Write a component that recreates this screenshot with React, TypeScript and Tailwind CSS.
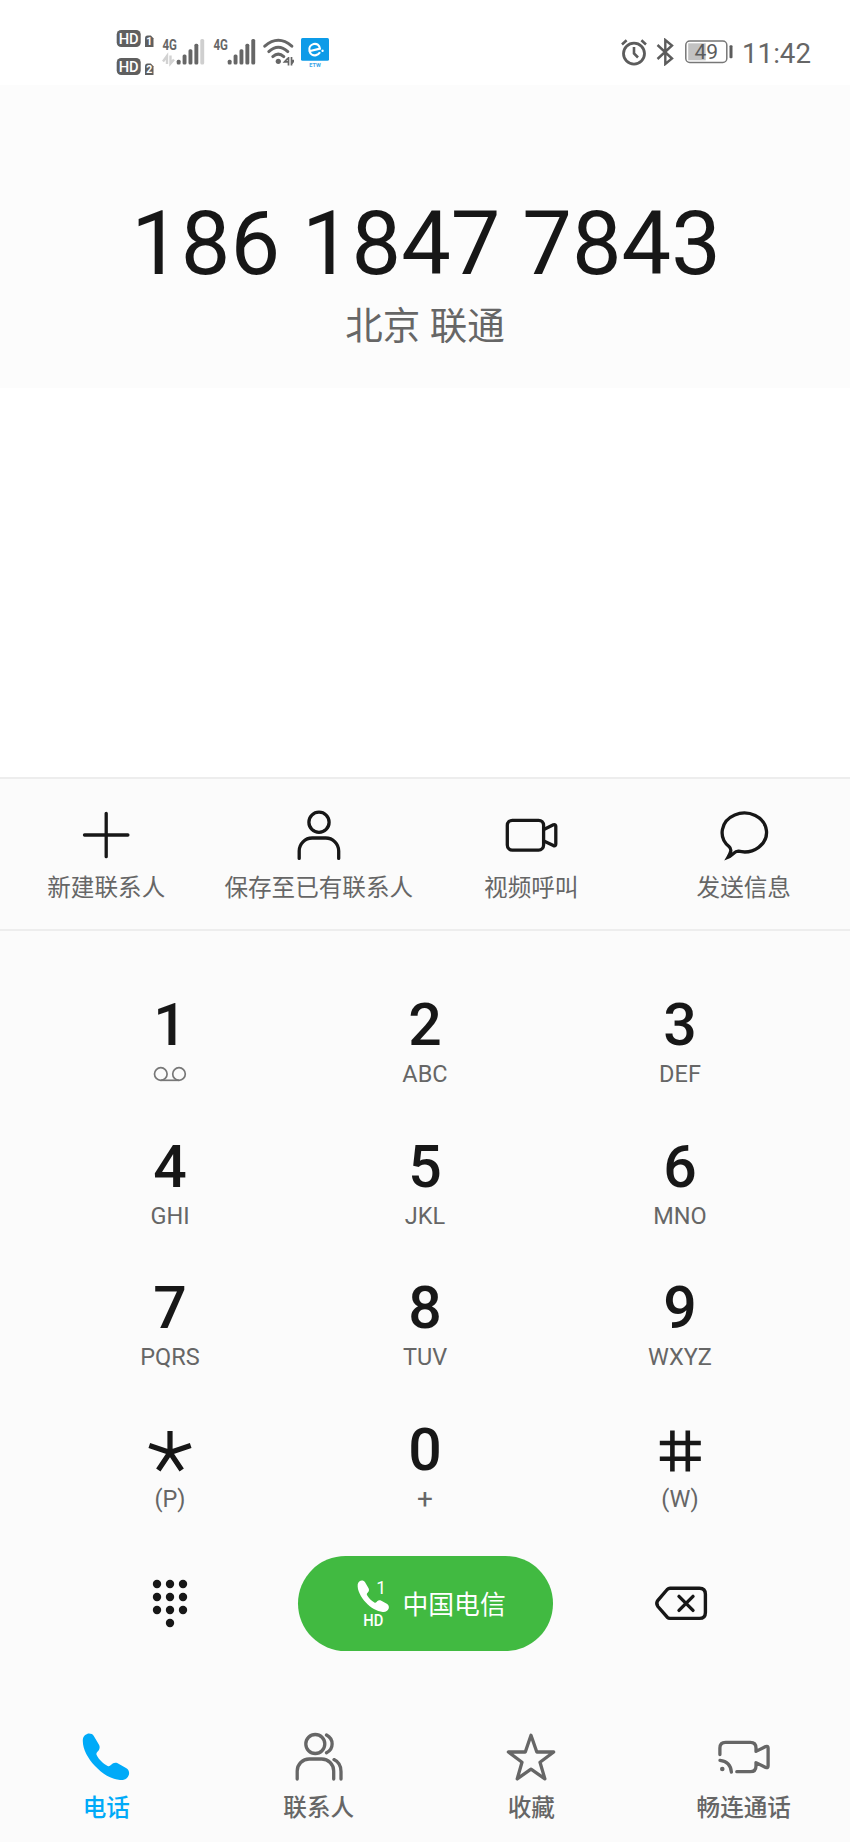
import React from 'react';

const LATIN = "font-['Roboto','Noto_Sans_CJK_SC',sans-serif]";

function HdBadges() {
  return (
    <svg className="h-[50px] w-[38px]" viewBox="0 0 38 50">
      {[0, 28].map((y, i) => (
        <g key={y}>
          <rect x="0.7" y={y + 2} width="24" height="17" rx="4.5" fill="#5f5f5f" />
          <text x="2.700" y={y + 16} textLength="20" lengthAdjust="spacingAndGlyphs" fontFamily="Roboto" fontSize="15.5" fontWeight="500" fill="#fff">HD</text>
          <path d={`M29 ${y + 10.5}q0-3 2.6-3h3.200l2.700 2.700V${y + 19}H29z`} fill="#5f5f5f" />
          <text x="33.2" y={y + 17.2} textAnchor="middle" fontFamily="Roboto" fontSize="10.500" fontWeight="700" fill="#fff">{i + 1}</text>
        </g>
      ))}
    </svg>
  );
}

function Signal({ weak }: { weak?: boolean }) {
  const tops = [31.8, 26.5, 21.2, 15.8, 11];
  return (
    <svg className="h-[50px] w-[43px]" viewBox="0 0 43 50">
      <text x="0.5" y="21.8" textLength="14.5" lengthAdjust="spacingAndGlyphs" fontFamily="Roboto" fontSize="15.5" fontWeight="700" fill="#666">4G</text>
      {weak && (
        <path d="M1 33.500L5 28v8M8.500 27.500v8l3.500-4" fill="none" stroke="#d2d2d2" strokeWidth="2.400" />
      )}
      {tops.map((t, i) => (
        <rect key={t} x={14.7 + i * 5.9} y={t} width="3.9" height={36.5 - t} rx="1.5" fill={weak && i === 4 ? '#cfcfcf' : '#666'} />
      ))}
    </svg>
  );
}

function Wifi() {
  return (
    <svg className="h-[50px] w-[31px]" viewBox="0 0 31 50" fill="none" stroke="#666" strokeWidth="3" strokeLinecap="round">
      <path d="M1.800 18.200Q15.300 6.400 28.800 18.200" />
      <path d="M5.800 23.600Q15.300 15 24.800 23.600" />
      <path d="M9.800 28.600Q15.300 23.600 20.800 28.600" />
      <circle cx="15.300" cy="33.300" r="2.600" fill="#666" stroke="none" />
      <path d="M25.500 29v8.500M25.500 29.500L21.500 33.800h4M28.500 29v8.500M28.500 36l2.500-3.500h-2.500" strokeWidth="1.700" strokeLinecap="butt" />
    </svg>
  );
}

function CloudApp() {
  return (
    <svg className="h-[50px] w-[28px]" viewBox="0 0 28 50">
      <rect y="10" width="28" height="22.800" rx="1.500" fill="#0d9be8" />
      <g transform="rotate(-14 14 21.500)">
        <path d="M9 21.800h10c.3-3.400-1.700-6-5-6-3.300 0-5.700 2.600-5.700 5.800 0 3.400 2.400 5.600 5.400 5.600 1.900 0 3.300-.6 4.500-1.800" fill="none" stroke="#fff" strokeWidth="2.200" />
        <circle cx="21" cy="24.600" r="1.200" fill="#fff" />
      </g>
      <text x="14" y="38.500" textAnchor="middle" fontFamily="Roboto" fontSize="5.500" fontWeight="700" fill="#3aa5e8">ETW</text>
    </svg>
  );
}

function Alarm() {
  return (
    <svg className="h-[28px] w-[28px]" viewBox="0 0 28 28" fill="none" stroke="#5c5c5c" strokeWidth="2.800">
      <circle cx="14" cy="15.600" r="10.500" />
      <path d="M14 9v6.500l4 4M2 6.500l4.600-4.200M26 6.500l-4.600-4.200" strokeWidth="2.600" />
    </svg>
  );
}

function Bluetooth() {
  return (
    <svg className="h-[28px] w-[18px]" viewBox="0 0 18 28" fill="none" stroke="#5c5c5c" strokeWidth="2.400">
      <path d="M1.500 7L16 20.500 9.300 26V2L16 7.500 1.500 21" />
    </svg>
  );
}

function Battery() {
  return (
    <svg className="h-[28px] w-[48px]" viewBox="0 0 48 28">
      <rect x="0.800" y="3" width="41" height="21.500" rx="4" fill="none" stroke="#777" strokeWidth="1.500" />
      <rect x="3.200" y="5.300" width="17.500" height="17" fill="#c2c2c2" />
      <rect x="44.500" y="7.300" width="3" height="13" rx="1" fill="#5c5c5c" />
      <text x="21.300" y="21.300" textAnchor="middle" fontFamily="Roboto" fontSize="21" fill="#5c5c5c">49</text>
    </svg>
  );
}

const HANDSET =
  'M4.900 11C5.500 8 8.500 5.600 11 5.600C13 5.600 14.800 6.300 15.800 8L21 16.800C22.200 19 21.600 21.500 20.200 23C18.800 24.600 18 25.500 18.600 27C20.500 31 25.500 36 29.600 38C31 38.700 32 38 33.200 36.800C34.800 35 37 34 39.200 35.100L48 40C51 41.800 51.600 44.500 50.800 47C49.500 50.800 46 52.500 42 52C33 51 24.500 46 17 38C9.500 30 4 20 4.900 11Z';

function Icon({ children, color }: { children: React.ReactNode; color: string }) {
  return (
    <svg className="size-14" viewBox="0 0 56 56" fill="none" stroke={color} strokeWidth="3.300" strokeLinecap="round" strokeLinejoin="round">
      {children}
    </svg>
  );
}

const actions = [
  { label: '新建联系人', icon: <path d="M28.200 6.300v43.400M6.500 28h43.400" /> },
  {
    label: '保存至已有联系人',
    icon: (
      <>
        <circle cx="28" cy="15.300" r="10.100" />
        <path d="M8.200 51.400V44a13 13 0 0 1 13-13h13.500a13 13 0 0 1 13 13v7.400" />
      </>
    ),
  },
  {
    label: '视频呼叫',
    icon: (
      <>
        <rect x="4.300" y="13.300" width="36.300" height="29.800" rx="5" />
        <path d="M40.800 22.500l9.600-4.700q2.400-.8 2.400 1.500v17.800q0 2.300-2.400 1.500L40.800 34" />
      </>
    ),
  },
  {
    label: '发送信息',
    icon: <path strokeLinejoin="miter" d="M22.500 44.200A22.200 19.400 0 1 0 13 39.500C16.200 42.200 14.800 45.500 12 50.300C16.500 48.600 18.500 43.900 22.500 44.200Z" />,
  },
];

const tabs = [
  { label: '电话', active: true, icon: <path d={HANDSET} fill="#00aaf8" stroke="none" /> },
  {
    label: '联系人',
    icon: (
      <>
        <circle cx="24.300" cy="16" r="9.500" />
        <path d="M6.200 51V43a12 12 0 0 1 12-12h12.500a12 12 0 0 1 12 12v8M43 31.600q7 3.400 7 12V51M35.500 7c7.500 4 7.500 14 0 17.700" />
      </>
    ),
  },
  { label: '收藏', icon: <path d="M28 7.200L33.800 24h16.900L37 34.300l4.900 16.600L28 41.200 14.200 50.900 19 34.300 5.400 24h16.900z" /> },
  {
    label: '畅连通话',
    icon: (
      <>
        <path d="M3.900 26.500V20q0-5.700 5.700-5.700h24.700q5.700 0 5.700 5.700v3.400l9.700-4.900q2.400-.8 2.400 1.500v18q0 2.300-2.400 1.500L40 34.600V38q0 5.700-5.700 5.700H20.800M4 32.400q10.500 1.200 11.400 11.700" />
        <circle cx="6.300" cy="41" r="2.300" fill="#666" stroke="none" />
      </>
    ),
  },
];

const voicemail = (
  <svg className="h-[17px] w-[34px]" viewBox="0 0 34 17" fill="none" stroke="#777" strokeWidth="1.700">
    <circle cx="7.800" cy="8" r="6.300" />
    <circle cx="26" cy="8" r="6.300" />
    <path d="M7.800 14.300H26" />
  </svg>
);

const star = (
  <svg className="h-[42px] w-[44px]" viewBox="0 0 44 42" fill="none" stroke="#171717" strokeWidth="5.200">
    <path d="M22 1v21.500M1.300 15.500L22 22.500l20.700-7M22 22.500L10.300 40M22 22.500L33.700 40" />
  </svg>
);

const hash = (
  <svg className="h-[42px] w-[44px]" viewBox="0 0 44 42" fill="none" stroke="#171717" strokeWidth="4.600">
    <path d="M14.400.500v41M29.800.500v41M1.800 13h41M1.800 28.800h41" />
  </svg>
);

const keys: { main: React.ReactNode; sub: React.ReactNode; drawn?: boolean }[] = [
  { main: '1', sub: voicemail },
  { main: '2', sub: 'ABC' },
  { main: '3', sub: 'DEF' },
  { main: '4', sub: 'GHI' },
  { main: '5', sub: 'JKL' },
  { main: '6', sub: 'MNO' },
  { main: '7', sub: 'PQRS' },
  { main: '8', sub: 'TUV' },
  { main: '9', sub: 'WXYZ' },
  { main: star, sub: '(P)', drawn: true },
  { main: '0', sub: <span className="text-[28px]">+</span> },
  { main: hash, sub: '(W)', drawn: true },
];

const dots = [
  [6, 5], [19, 5], [32, 5],
  [6, 18], [19, 18], [32, 18],
  [6, 31], [19, 31], [32, 31],
  [19, 44],
];

export default function App() {
  return (
    <div className={`flex h-[1842px] w-[850px] flex-col overflow-hidden bg-[#fbfbfb] ${LATIN}`}>
      <div className="flex h-[85px] shrink-0 items-start justify-between bg-white pl-[116px] pr-[39px] pt-[28px]">
        <div className="flex">
          <HdBadges />
          <div className="ml-[8px] flex gap-[8px]">
            <Signal weak />
            <Signal />
          </div>
          <div className="ml-[7px] flex gap-[7px]">
            <Wifi />
            <CloudApp />
          </div>
        </div>
        <div className="flex pt-[10px]">
          <Alarm />
          <div className="ml-[8px] flex"><Bluetooth /></div>
          <div className="ml-[11px] flex"><Battery /></div>
          <span className="ml-[9px] text-[27.700px] leading-[32px] text-[#666]">11:42</span>
        </div>
      </div>

      <div className="flex h-[303px] shrink-0 flex-col items-center bg-[#fcfcfc] pt-[109px]">
        <div className="pl-[2px] text-[88.300px] leading-[100px] text-[#171717]">186 1847 7843</div>
        <div className="mt-[7px] text-[37.500px] leading-[50px] text-[#666]">北京 联通</div>
      </div>

      <div className="h-[389px] shrink-0 bg-white" />

      <div className="grid h-[154px] shrink-0 grid-cols-4 border-y-2 border-[#ededed] pt-[28px]">
        {actions.map((a) => (
          <div key={a.label} className="flex flex-col items-center">
            <Icon color="#171717">{a.icon}</Icon>
            <span className="mt-[8px] whitespace-nowrap text-[23.600px] leading-[34px] text-[#666]">{a.label}</span>
          </div>
        ))}
      </div>

      <div className="grid h-[566px] shrink-0 auto-rows-[141.500px] grid-cols-3 px-[42.500px] pt-[58px]">
        {keys.map((k, i) => (
          <div key={i} className="flex flex-col items-center">
            <div className={`flex h-[70px] justify-center text-[59px] font-medium leading-[72px] text-[#171717] ${k.drawn ? 'pt-[16px]' : ''}`}>{k.main}</div>
            <div className="flex h-[30px] items-center text-[23.500px] leading-[30px] text-[#666]">{k.sub}</div>
          </div>
        ))}
      </div>

      <div className="grid h-[154px] shrink-0 grid-cols-3 items-center justify-items-center px-[42.500px] pt-[59px]">
        <svg className="h-[50px] w-[38px]" viewBox="0 0 38 50" fill="#171717">
          {dots.map(([x, y]) => (
            <circle key={`${x}-${y}`} cx={x} cy={y} r="4.200" />
          ))}
        </svg>
        <div className="flex h-[95px] w-[255px] items-center rounded-full bg-[#41ba41] pl-[57px]">
          <svg className="h-[52px] w-[42px]" viewBox="0 0 42 52" fill="#fff">
            <path d={HANDSET} transform="translate(-0.600 -1.200) scale(.675)" />
            <text x="26.200" y="15.600" textAnchor="middle" fontFamily="Roboto" fontSize="17.500">1</text>
            <text x="8.300" y="47.800" textLength="20" lengthAdjust="spacingAndGlyphs" fontFamily="Roboto" fontSize="16" fontWeight="500">HD</text>
          </svg>
          <span className="ml-[6px] pt-[2px] text-[25.800px] leading-[38px] text-white">中国电信</span>
        </div>
        <svg className="mb-[2px] ml-[2px] h-[40px] w-[56px]" viewBox="0 0 56 40" fill="none" stroke="#171717" strokeWidth="3.400" strokeLinecap="round" strokeLinejoin="round">
          <path d="M17 5.300h29.400q6 0 6 6v18.100q0 6-6 6H17q-1.500 0-2.800-1.200L4.900 23.500q-2.400-3.100 0-6.200L14.200 6.500q1.300-1.200 2.800-1.200z" />
          <path d="M26 13.400l14 14M40 13.400l-14 14" />
        </svg>
      </div>

      <div className="grid grow grid-cols-4 pt-[77px]">
        {tabs.map((t) => (
          <div key={t.label} className="flex flex-col items-center">
            <Icon color="#666">{t.icon}</Icon>
            <span className={`mt-[7px] whitespace-nowrap text-[23.600px] font-medium leading-[34px] ${t.active ? 'text-[#00aaf8]' : 'text-[#666]'}`}>{t.label}</span>
          </div>
        ))}
      </div>
    </div>
  );
}
